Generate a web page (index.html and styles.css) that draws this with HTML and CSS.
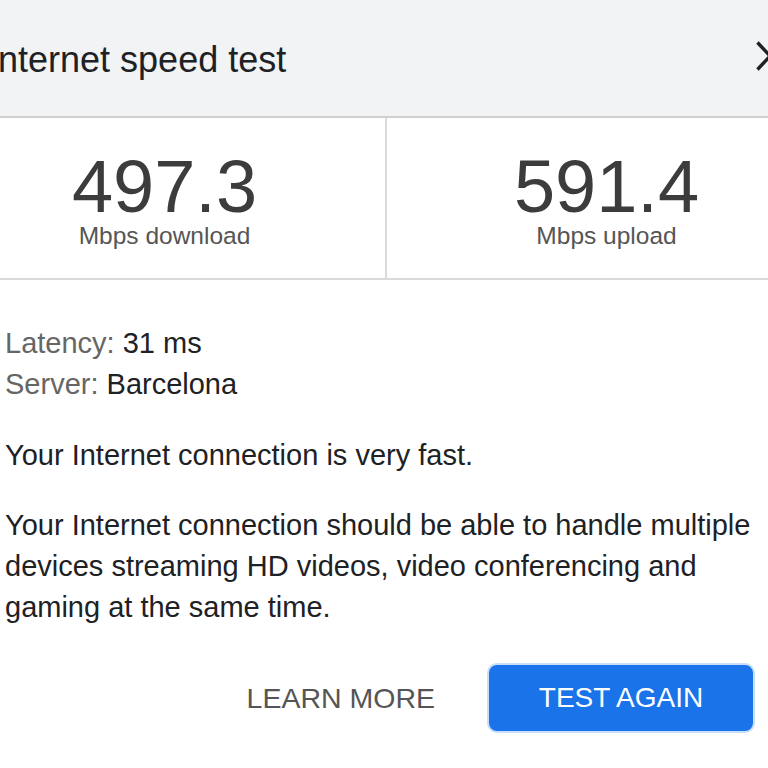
FILE: index.html
```html
<!DOCTYPE html>
<html>
<head>
<meta charset="utf-8">
<link rel="stylesheet" href="styles.css">
</head>
<body>
<div class="card">
  <header class="head">
    <h1 class="title">Internet speed test</h1>
    <svg class="close" width="28" height="30" viewBox="0 0 28 30"><path d="M1.5 1.5 L26.5 28.5 M26.5 1.5 L1.5 28.5" stroke="#202124" stroke-width="3.4" fill="none"/></svg>
  </header>
  <section class="metrics">
    <div class="metric">
      <div class="num">497.3</div>
      <div class="unit">Mbps download</div>
    </div>
    <div class="metric">
      <div class="num">591.4</div>
      <div class="unit">Mbps upload</div>
    </div>
  </section>
  <section class="body">
    <div class="facts">
      <div><span class="lbl">Latency:</span> 31 ms</div>
      <div><span class="lbl">Server:</span> Barcelona</div>
    </div>
    <p class="para first">Your Internet connection is very fast.</p>
    <p class="para">Your Internet connection should be able to handle multiple devices streaming HD videos, video conferencing and gaming at the same time.</p>
    <div class="actions">
      <button class="btn-text">LEARN MORE</button>
      <button class="btn-primary">TEST AGAIN</button>
    </div>
  </section>
</div>
</body>
</html>
```
FILE: styles.css
```css
html, body {
  margin: 0;
  padding: 0;
  background: #ffffff;
  overflow: hidden;
}
body {
  font-family: "Liberation Sans", Arial, sans-serif;
  color: #202124;
}
.card {
  margin-left: -56px;
  width: 882px;
}
.head {
  height: 116px;
  background: #f1f3f4;
  border-bottom: 2px solid #d0d0d0;
  display: flex;
  align-items: flex-start;
  justify-content: space-between;
  padding: 0 42px 0 44px;
  box-sizing: content-box;
}
.title {
  margin: 40px 0 0 0;
  font-weight: 400;
  font-size: 36px;
  line-height: 40px;
  color: #202124;
}
.close {
  margin-top: 41px;
}
.metrics {
  display: grid;
  grid-template-columns: 1fr 1fr;
  height: 160px;
  border-bottom: 2px solid #dadada;
}
.metric {
  display: flex;
  flex-direction: column;
  align-items: center;
  padding-top: 37px;
}
.metric + .metric {
  border-left: 2px solid #dadada;
}
.num {
  font-size: 74px;
  line-height: 64px;
  color: #3c3c3c;
}
.unit {
  font-size: 24.5px;
  line-height: 34px;
  color: #555;
}
.body {
  padding: 43px 0 0 61px;
  font-size: 29px;
  line-height: 41px;
}
.lbl {
  color: #666;
}
.para {
  margin: 0;
  width: 770px;
}
.para.first {
  margin: 30px 0 29px 0;
}
.actions {
  display: flex;
  align-items: center;
  justify-content: flex-end;
  gap: 52px;
  padding-right: 71px;
  margin-top: 35px;
}
.btn-text {
  background: none;
  border: none;
  font-family: inherit;
  font-size: 28.5px;
  color: #555;
  padding: 0;
}
.btn-primary {
  width: 268px;
  height: 70px;
  background: #1a73e8;
  color: #fff;
  border: 2px solid #c9defa;
  border-radius: 10px;
  font-family: inherit;
  font-size: 28px;
  padding: 0;
}
```
